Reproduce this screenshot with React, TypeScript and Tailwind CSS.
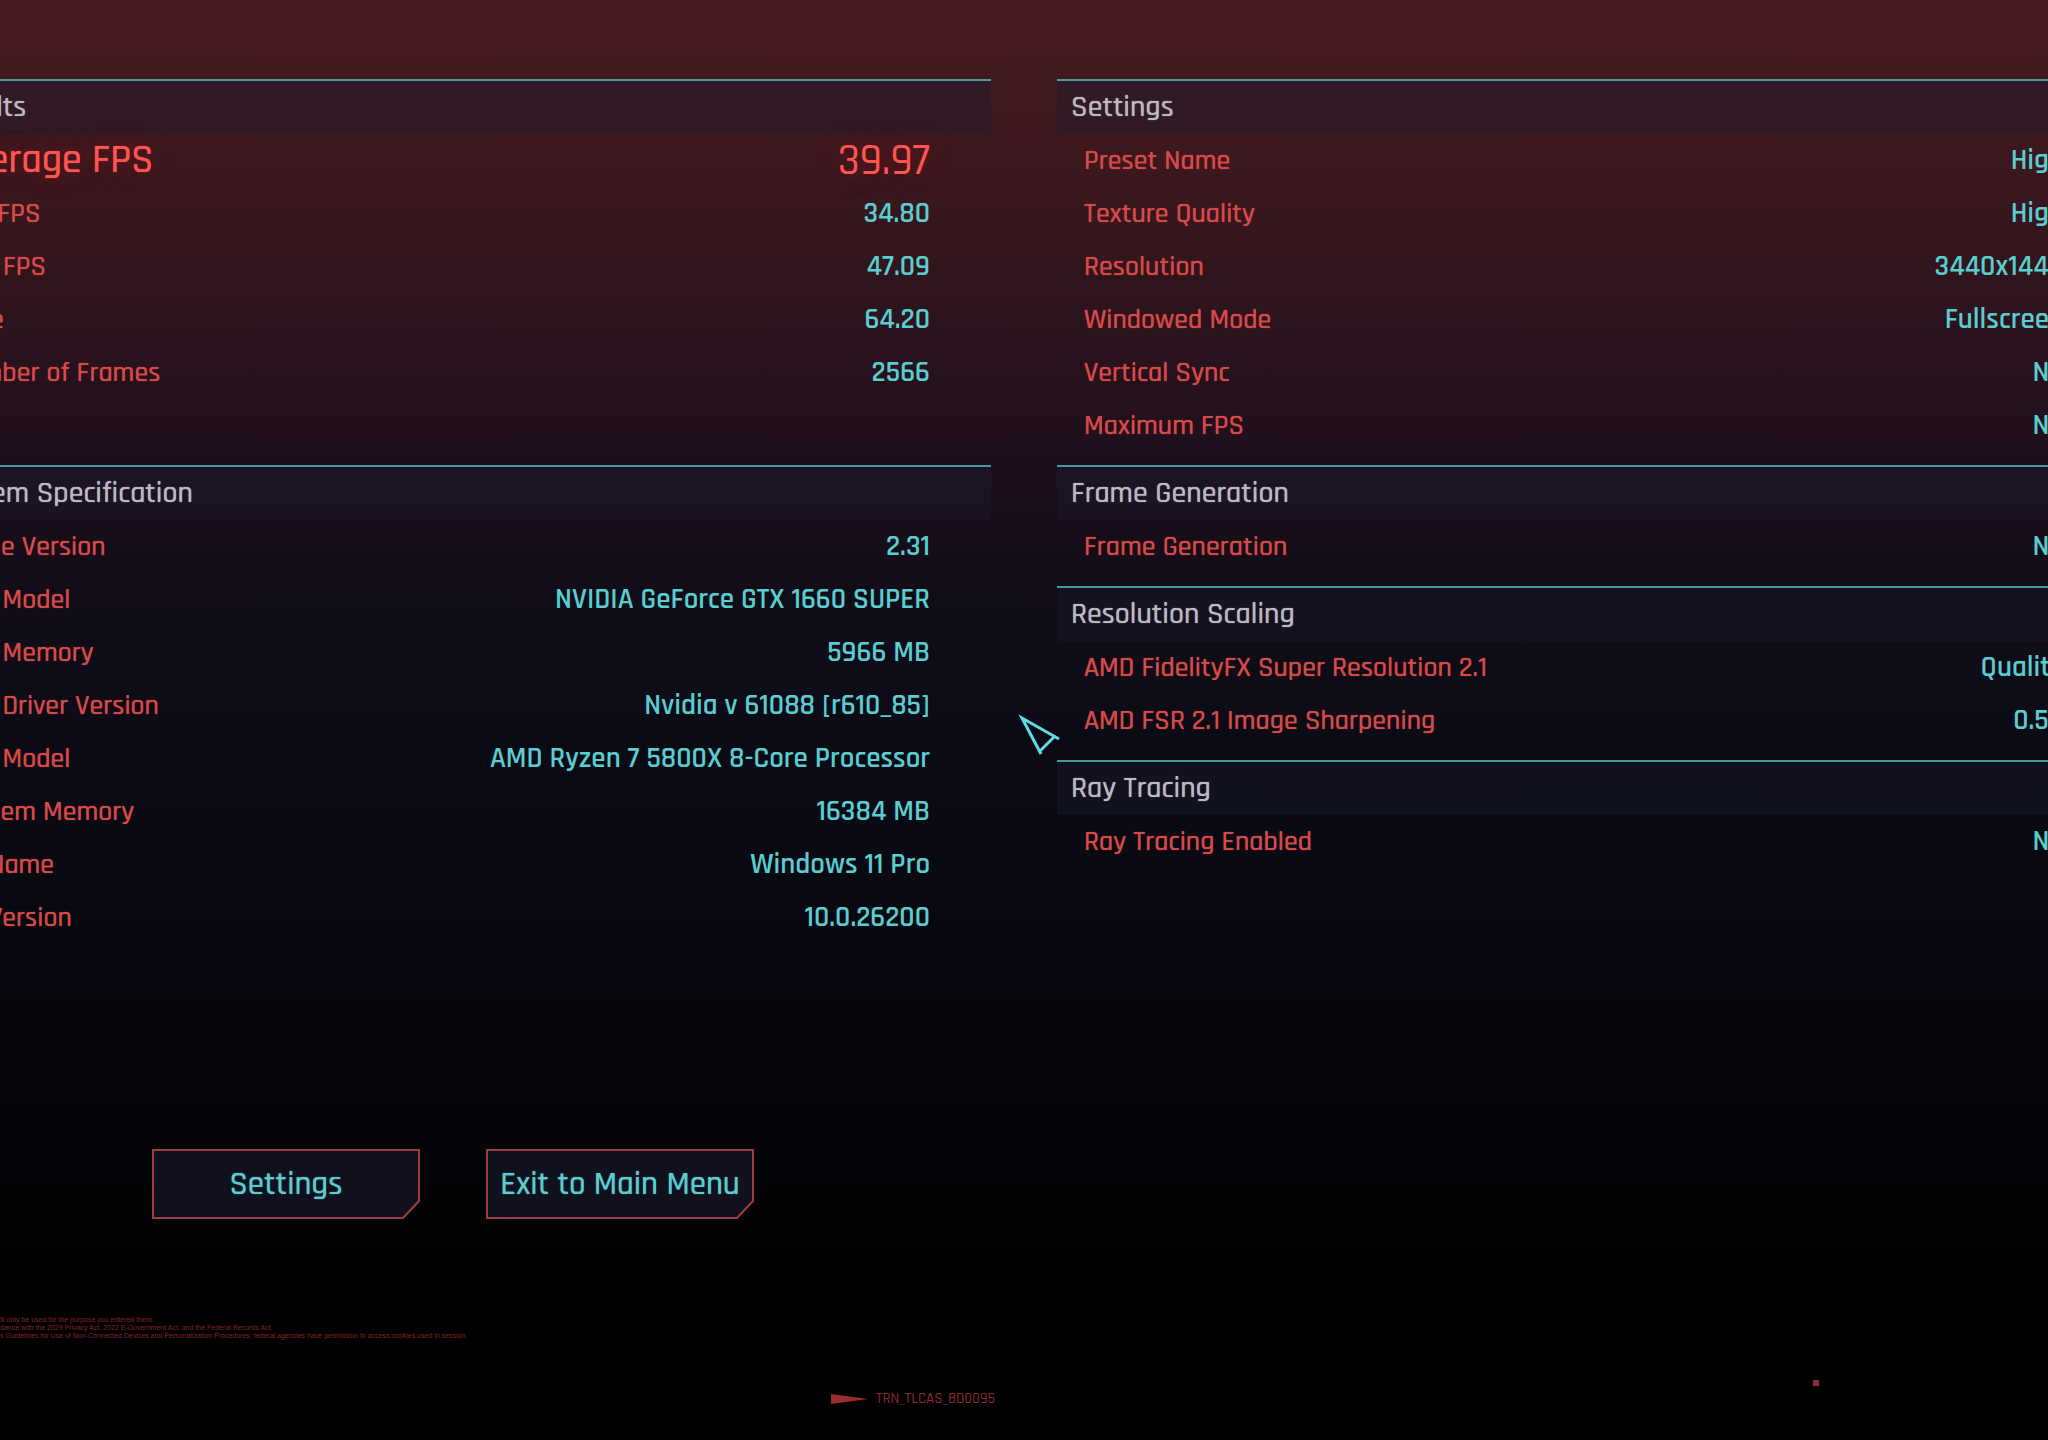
interface Row {
  label: string;
  value: string;
  highlight?: boolean;
}

interface SectionProps {
  title: string;
  rows: Row[];
  className?: string;
}

const results: Row[] = [
  { label: 'Average FPS', value: '39.97', highlight: true },
  { label: 'Min FPS', value: '34.80' },
  { label: 'Max FPS', value: '47.09' },
  { label: 'Time', value: '64.20' },
  { label: 'Number of Frames', value: '2566' },
];

const system: Row[] = [
  { label: 'Game Version', value: '2.31' },
  { label: 'GPU Model', value: 'NVIDIA GeForce GTX 1660 SUPER' },
  { label: 'GPU Memory', value: '5966 MB' },
  { label: 'GPU Driver Version', value: 'Nvidia v 61088 [r610_85]' },
  { label: 'CPU Model', value: 'AMD Ryzen 7 5800X 8-Core Processor' },
  { label: 'System Memory', value: '16384 MB' },
  { label: 'OS Name', value: 'Windows 11 Pro' },
  { label: 'OS Version', value: '10.0.26200' },
];

const settings: Row[] = [
  { label: 'Preset Name', value: 'High' },
  { label: 'Texture Quality', value: 'High' },
  { label: 'Resolution', value: '3440x1440' },
  { label: 'Windowed Mode', value: 'Fullscreen' },
  { label: 'Vertical Sync', value: 'No' },
  { label: 'Maximum FPS', value: 'No' },
];

const frameGeneration: Row[] = [{ label: 'Frame Generation', value: 'No' }];

const scaling: Row[] = [
  { label: 'AMD FidelityFX Super Resolution 2.1', value: 'Quality' },
  { label: 'AMD FSR 2.1 Image Sharpening', value: '0.50' },
];

const rayTracing: Row[] = [{ label: 'Ray Tracing Enabled', value: 'No' }];

function Section({ title, rows, className = 'pb-[13px]' }: SectionProps) {
  return (
    <section className={className}>
      <h2 className="flex h-[55px] items-center border-t-2 border-[#4f959c] bg-[#1c1c30]/40 pb-[2px] pl-[14px] text-[30px] leading-none text-[#bdb9c0] [text-shadow:0_0_1px_currentColor]">
        {title}
      </h2>
      <dl>
        {rows.map((row) => (
          <div key={row.label} className="flex h-[53px] items-center justify-between pl-[27px] pr-[61px] leading-none">
            <dt
              className={
                row.highlight
                  ? 'text-[40px] text-[#ff5450] [text-shadow:0_0_1px_currentColor,0_0_24px_#c8202860]'
                  : 'text-[28px] text-[#d84a48] [text-shadow:0_0_1px_currentColor]'
              }
            >
              {row.label}
            </dt>
            <dd
              className={
                row.highlight
                  ? 'text-[44px] text-[#ff5450] [text-shadow:0_0_24px_#c8202860]'
                  : 'text-[29px] font-semibold text-[#5acdd0]'
              }
            >
              {row.value}
            </dd>
          </div>
        ))}
      </dl>
    </section>
  );
}

function MenuButton({ label }: { label: string }) {
  return (
    <button
      type="button"
      className="relative h-[70px] w-[268px] cursor-pointer whitespace-nowrap text-[33px] leading-none text-[#5acdd0] [text-shadow:0_0_1px_currentColor]"
    >
      <svg className="absolute inset-0 size-full" viewBox="0 0 268 70" aria-hidden="true">
        <path d="M1 1H267V52L251 69H1Z" fill="#11111e" stroke="#9c3c40" strokeWidth="2" />
      </svg>
      <span className="relative">{label}</span>
    </button>
  );
}

function Cursor() {
  return (
    <svg className="absolute left-[1018px] top-[714px]" width="44" height="44" viewBox="0 0 44 44" fill="none" aria-hidden="true">
      <path d="M41 25L4 4L23 40M22 37L37 22" stroke="#5fdde2" strokeWidth="3" />
    </svg>
  );
}

export default function App() {
  return (
    <div className="relative min-h-screen overflow-hidden bg-[linear-gradient(to_bottom,#481b23_0px,#41191f_100px,#3a171e_180px,#31151d_270px,#27121d_360px,#1f0f1c_455px,#170e19_530px,#100d18_610px,#0b0b16_740px,#07080f_950px,#030407_1150px,#000000_1280px)] font-['Rajdhani',Roboto,sans-serif] font-medium">
      <main className="-mx-[77px] grid grid-cols-2 gap-x-[66px] pt-[79px]">
        <div>
          <Section title="Results" rows={results} className="pb-[66px]" />
          <Section title="System Specification" rows={system} />
        </div>
        <div>
          <Section title="Settings" rows={settings} />
          <Section title="Frame Generation" rows={frameGeneration} />
          <Section title="Resolution Scaling" rows={scaling} />
          <Section title="Ray Tracing" rows={rayTracing} />
        </div>
      </main>

      <div className="flex gap-[66px] pl-[152px] pt-[192px]">
        <MenuButton label="Settings" />
        <MenuButton label="Exit to Main Menu" />
      </div>

      <footer className="pt-[97px]">
        <div className="whitespace-nowrap font-['Liberation_Sans',sans-serif] text-[7px] leading-[8px] text-[#84222a]">
          <p>ill only be used for the purpose you entered them.</p>
          <p>dance with the 2029 Privacy Act, 2022 E-Government Act, and the Federal Records Act.</p>
          <p>s Guidelines for Use of Non-Connected Devices and Personalization Procedures, federal agencies have permission to access cookies used in session.</p>
        </div>
        <div className="flex items-center pl-[831px] pr-[229px] pt-[40px]">
          <svg width="37" height="12" viewBox="0 0 37 12" aria-hidden="true">
            <path d="M0 1L37 6L0 11Z" fill="#9a2e2c" />
          </svg>
          <span className="pl-2 text-[15px] leading-4 text-[#8a2a2a]">TRN_TLCAS_8D0095</span>
          <span className="mb-8 ml-auto size-[6px] bg-[#8c2a3e]" />
        </div>
      </footer>

      <Cursor />
    </div>
  );
}
